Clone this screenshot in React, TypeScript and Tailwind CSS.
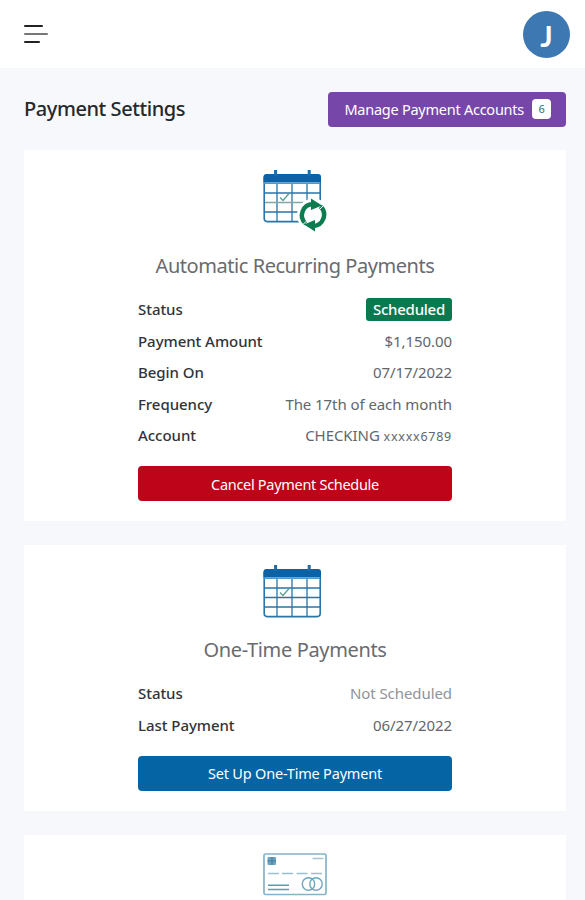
import type { ReactNode } from 'react'

function CalendarIcon({ recurring = false }: { recurring?: boolean }) {
  return (
    <svg width="64" height="64" viewBox="0 0 64 64" fill="none" className="block">
      <g stroke="#2a74a8" strokeWidth="1.3">
        <path d="M14 14v38M29 14v38M44 14v38" />
        <path d="M1 24h56M1 43h56" />
        <path d="M1 33.5h56" stroke={recurring ? '#7fa9a9' : '#2a74a8'} />
        <rect x="1.2" y="6" width="56" height="46.6" rx="3" strokeWidth="1.6" />
      </g>
      <path d="M.5 8a3 3 0 0 1 3-3H55a3 3 0 0 1 3 3v5.5H.5z" fill="#0d62a5" />
      <path d="M1 14.3h56" stroke="#5c97c4" strokeWidth="1.6" />
      <path d="M12.6 1v6M46.2 1v6" stroke="#1f6ba5" strokeWidth="3" />
      <path d="M17 28.5l3 3 6.5-7.5" stroke="#5e9c92" strokeWidth="1.3" />
      {recurring && (
        <>
          <circle cx="50.5" cy="46" r="16.5" fill="#fff" />
          <path d="M42.6 54.6A11.3 11.3 0 0 1 50 35" stroke="#0b7b50" strokeWidth="4.4" />
          <path d="M57.4 37.4A11.3 11.3 0 0 1 50 57" stroke="#0b7b50" strokeWidth="4.4" />
          <path d="M48 29.5l11 7-11 4.500zM52 62.500l-11-7 11-4.500z" fill="#0b7b50" />
          <path d="M39 56.5l6-6M61.500 35.500l-6 6" stroke="#fff" strokeWidth="1" />
        </>
      )}
    </svg>
  )
}

function CreditCardIcon() {
  return (
    <svg width="64" height="43" viewBox="0 0 64 43" fill="none" className="block">
      <rect x="1" y="1" width="62" height="40.5" rx="1.5" stroke="#86b3c8" strokeWidth="1.7" />
      <rect x="4.5" y="4" width="8.5" height="8" rx="1" fill="#6ba2bf" />
      <path d="M4.5 8h8.5M9 4v8" stroke="#3e7da0" strokeWidth="1" />
      <path d="M49.5 5.5h11" stroke="#a5c5d3" strokeWidth="1.5" />
      <path d="M5 20.5h11M19 20.5h11M33.5 20.5h11M48 20.5h11" stroke="#9abfce" strokeWidth="1.6" />
      <path d="M5 32.2h21M5 36.5h21" stroke="#5c9bb8" strokeWidth="1.5" />
      <circle cx="45.5" cy="31" r="6.2" stroke="#6fa5bf" strokeWidth="1.4" />
      <circle cx="53" cy="31" r="6.2" stroke="#6fa5bf" strokeWidth="1.4" />
    </svg>
  )
}

function Row({ label, children }: { label: string; children: ReactNode }) {
  return (
    <div className="flex h-[31.4px] items-center justify-between">
      <span className="font-medium tracking-[-0.05px] text-[#30343a]">{label}</span>
      <span className="tracking-[-0.07px] text-[#62666b]">{children}</span>
    </div>
  )
}

export default function App() {
  return (
    <div className="h-[900px] overflow-hidden bg-[#f6f8fc] font-['Noto_Sans','Open_Sans',sans-serif] text-[15px]">
      <header className="flex h-[68px] items-center justify-between bg-white pl-6 pr-[15px]">
        <button aria-label="Menu" className="flex flex-col gap-[6px]">
          <span className="h-[2px] w-[19px] rounded-full bg-[#222]" />
          <span className="h-[2px] w-[24px] rounded-full bg-[#777]" />
          <span className="h-[2px] w-[16px] rounded-full bg-[#222]" />
        </button>
        <div className="flex size-[47px] items-center justify-center rounded-full bg-[#3d78b2] pt-[4px] font-['Lato',sans-serif] text-[29px] font-bold text-white">
          J
        </div>
      </header>

      <main className="pl-6 pr-[19px]">
        <div className="flex h-[82px] items-center justify-between">
          <h1 className="text-[20px] font-medium tracking-[-0.43px] text-[#25282c]">Payment Settings</h1>
          <button className="flex h-[35px] items-center gap-2 rounded-[4px] bg-[#7647a9] pl-4 pr-[15px] text-[14.5px] tracking-[-0.25px] text-white">
            <span className="pt-px">Manage Payment Accounts</span>
            <span className="flex h-5 w-[19px] items-center justify-center rounded-[4px] bg-white text-[11px] font-medium text-[#4f809b]">
              6
            </span>
          </button>
        </div>

        <section className="flex h-[371px] flex-col items-center bg-white pt-[19px]">
          <div className="h-16 w-16">
            <CalendarIcon recurring />
          </div>
          <h2 className="mt-[18px] text-[20px] leading-[30px] tracking-[-0.45px] text-[#686b70]">
            Automatic Recurring Payments
          </h2>
          <div className="mt-[13px] w-[314px]">
            <Row label="Status">
              <span className="flex h-[23px] items-center rounded-[3px] bg-[#0b7950] px-[7px] font-medium tracking-[-0.25px] text-white">
                Scheduled
              </span>
            </Row>
            <Row label="Payment Amount">$1,150.00</Row>
            <Row label="Begin On">07/17/2022</Row>
            <Row label="Frequency">The 17th of each month</Row>
            <Row label="Account">
              CHECKING <span className="text-[12.5px] tracking-[0.75px]">xxxxx6789</span>
            </Row>
            <button className="mt-[15px] h-[35px] w-full rounded-[4px] bg-[#bd0418] pt-[2px] text-[14.5px] tracking-[-0.3px] text-white">
              Cancel Payment Schedule
            </button>
          </div>
        </section>

        <section className="mt-6 flex h-[266px] flex-col items-center bg-white pt-[19px]">
          <div className="h-16 w-16">
            <CalendarIcon />
          </div>
          <h2 className="mt-[7px] text-[20px] leading-[30px] tracking-[-0.35px] text-[#686b70]">One-Time Payments</h2>
          <div className="mt-[13px] w-[314px]">
            <Row label="Status">
              <span className="text-[#909397]">Not Scheduled</span>
            </Row>
            <Row label="Last Payment">06/27/2022</Row>
            <button className="mt-[15px] h-[35px] w-full rounded-[4px] bg-[#0464a4] pt-[2px] text-[14.5px] tracking-[-0.2px] text-white">
              Set Up One-Time Payment
            </button>
          </div>
        </section>

        <section className="mt-6 flex h-[266px] flex-col items-center bg-white pt-[18px]">
          <CreditCardIcon />
        </section>
      </main>
    </div>
  )
}
